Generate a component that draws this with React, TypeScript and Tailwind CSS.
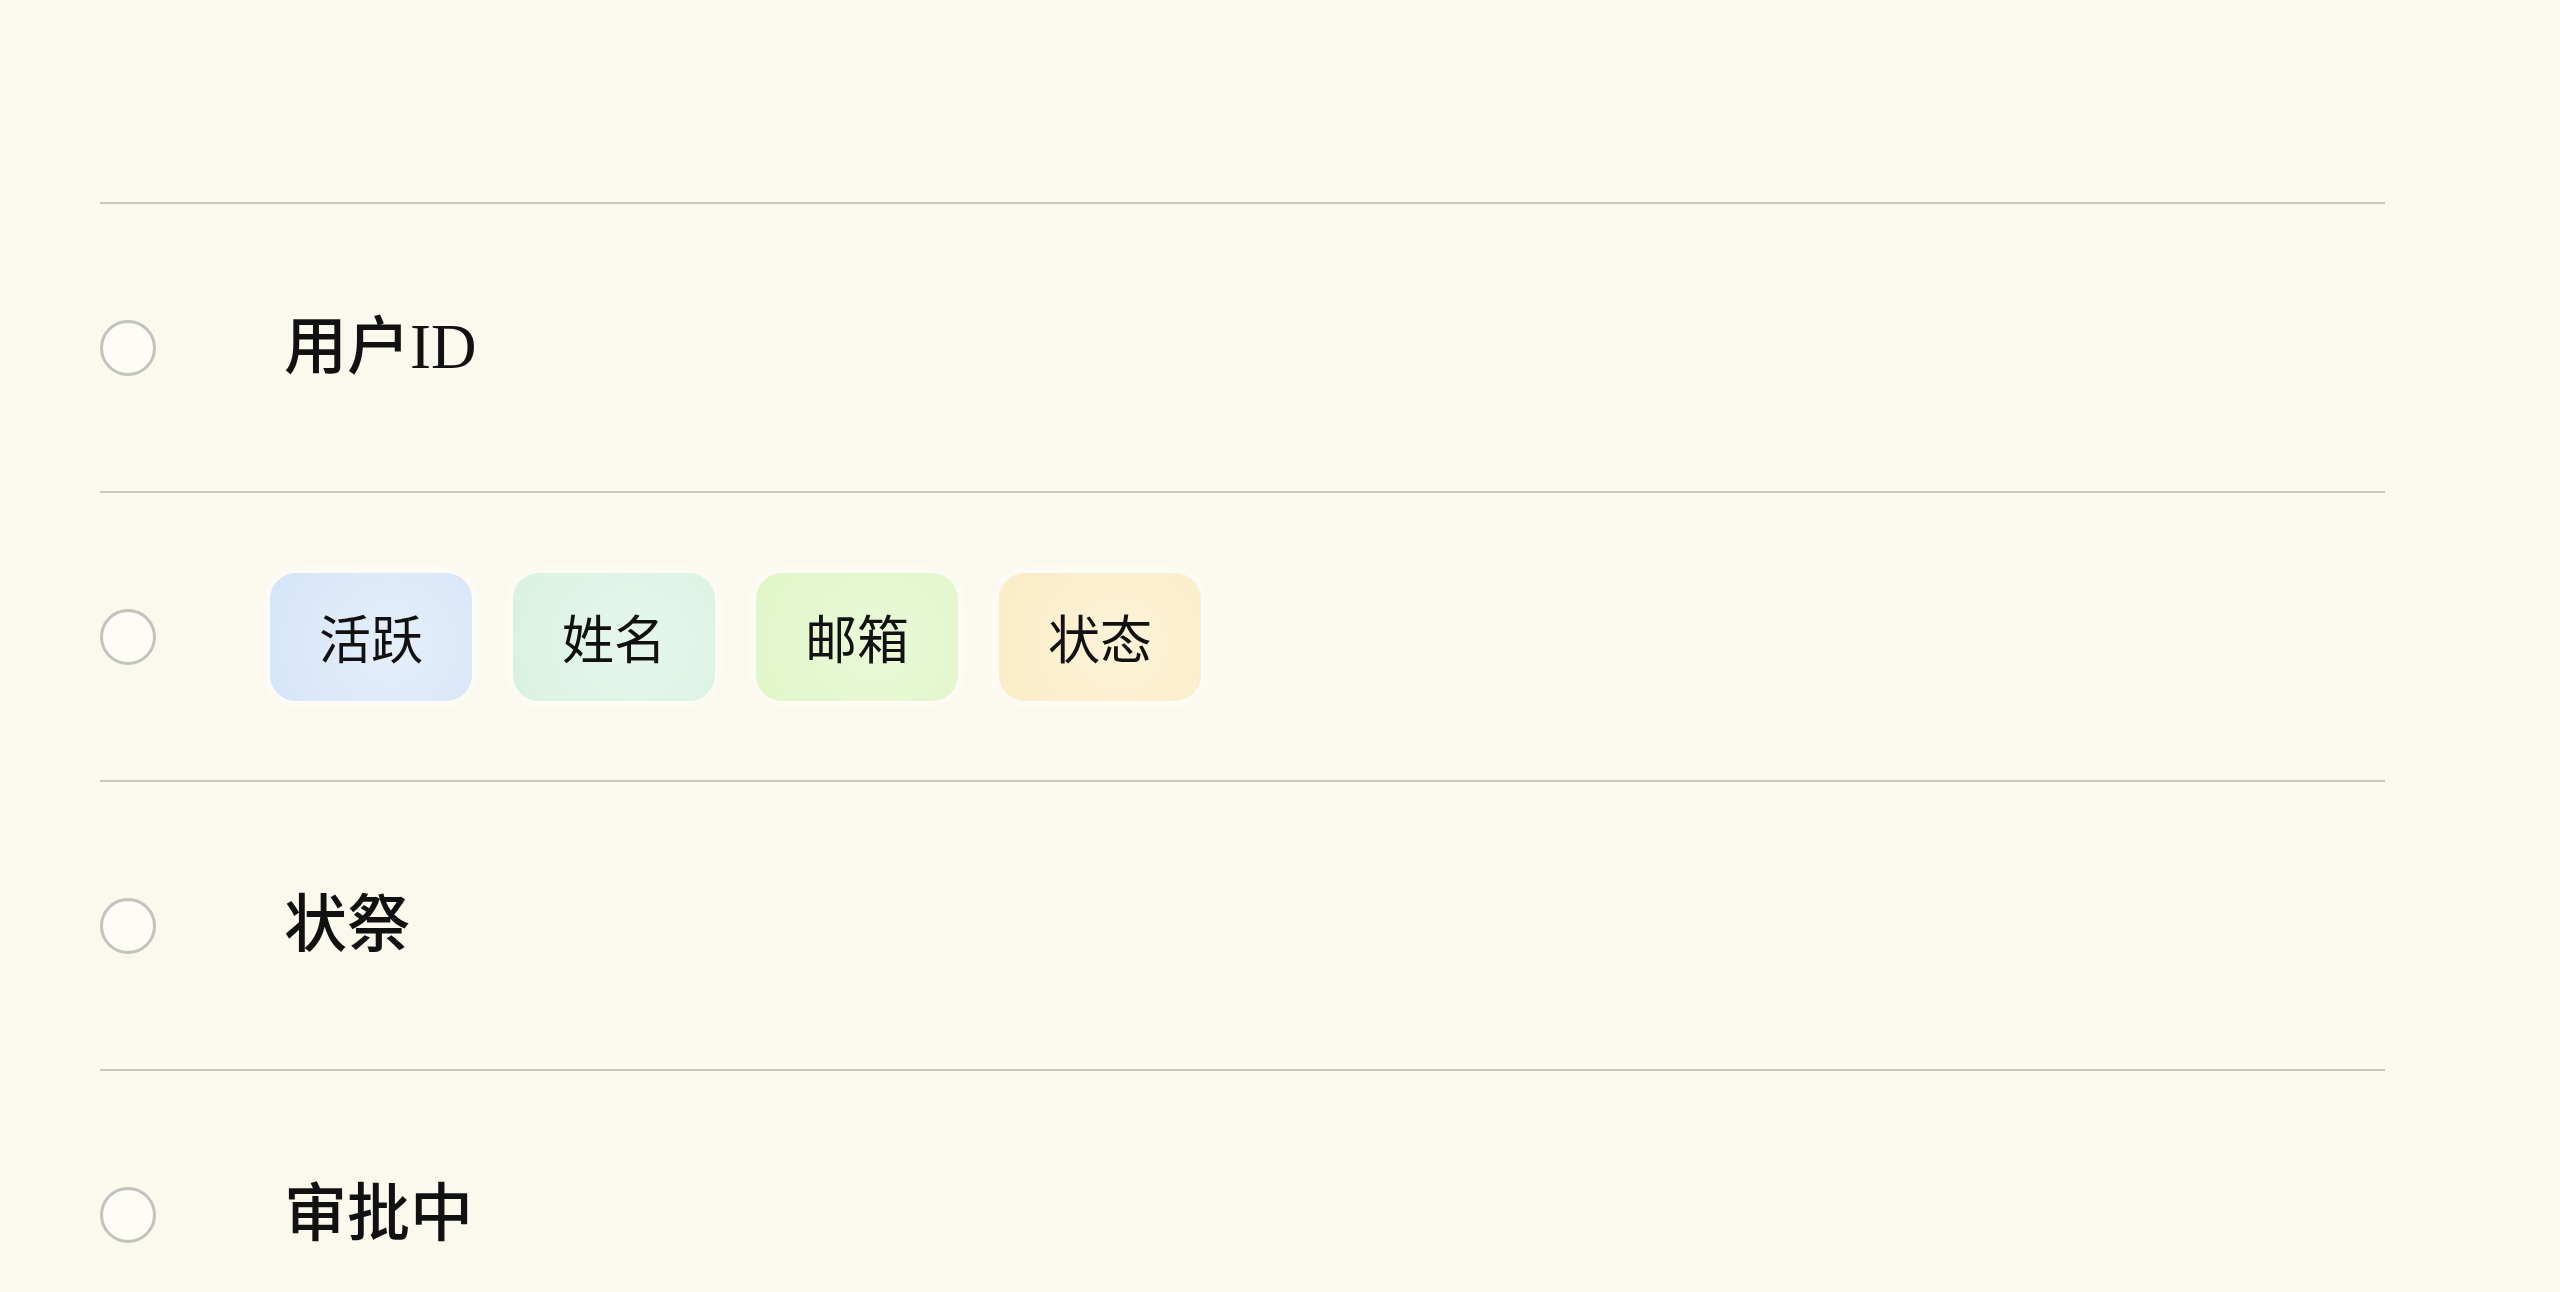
const ROWS: { id: string; label?: string; chips?: { text: string; cls: string }[] }[] = [
  { id: 'uid', label: '用户ID' },
  {
    id: 'chips',
    chips: [
      { text: '活跃', cls: 'bg-[radial-gradient(circle_at_60%_55%,#e6effb,#d4e4f8)]' },
      { text: '姓名', cls: 'bg-[radial-gradient(circle_at_60%_55%,#e6f7ed,#d8f1e2)]' },
      { text: '邮箱', cls: 'bg-[radial-gradient(circle_at_60%_55%,#ebf9d8,#e0f5c8)]' },
      { text: '状态', cls: 'bg-[radial-gradient(circle_at_60%_55%,#fdf3d8,#fbecc6)]' },
    ],
  },
  { id: 'status', label: '状祭' },
  { id: 'review', label: '审批中' },
];

export default function App() {
  return (
    <div
      className="w-full h-[1292px] overflow-hidden bg-[#fbf9ee] text-[#111]"
      style={{ fontFamily: '"Liberation Serif", "Noto Sans CJK SC", serif' }}
    >
      <div className="pt-[202px] pl-[100px] w-[2385px]">
        {ROWS.map((row) => (
          <div key={row.id} className="h-[289px] border-t-2 border-[#c6c7c0] flex items-center">
            {/* radio */}
            <div className="w-[56px] h-[56px] shrink-0 rounded-full border-[3px] border-[#c3c3be] bg-[#fdfcf6]" />
            {row.chips ? (
              <div className="ml-[114px] flex items-center gap-[41px]">
                {row.chips.map((c) => (
                  <div
                    key={c.text}
                    className={`w-[202px] h-[128px] rounded-[26px] flex items-center justify-center text-[52px] shadow-[0_0_16px_rgba(255,255,255,0.9)] ${c.cls}`}
                    style={{ fontFamily: '"Noto Sans CJK SC", sans-serif' }}
                  >
                    {c.text}
                  </div>
                ))}
              </div>
            ) : (
              <div className="ml-[128px] text-[63px] leading-none font-medium">{row.label}</div>
            )}
          </div>
        ))}
      </div>
    </div>
  );
}
